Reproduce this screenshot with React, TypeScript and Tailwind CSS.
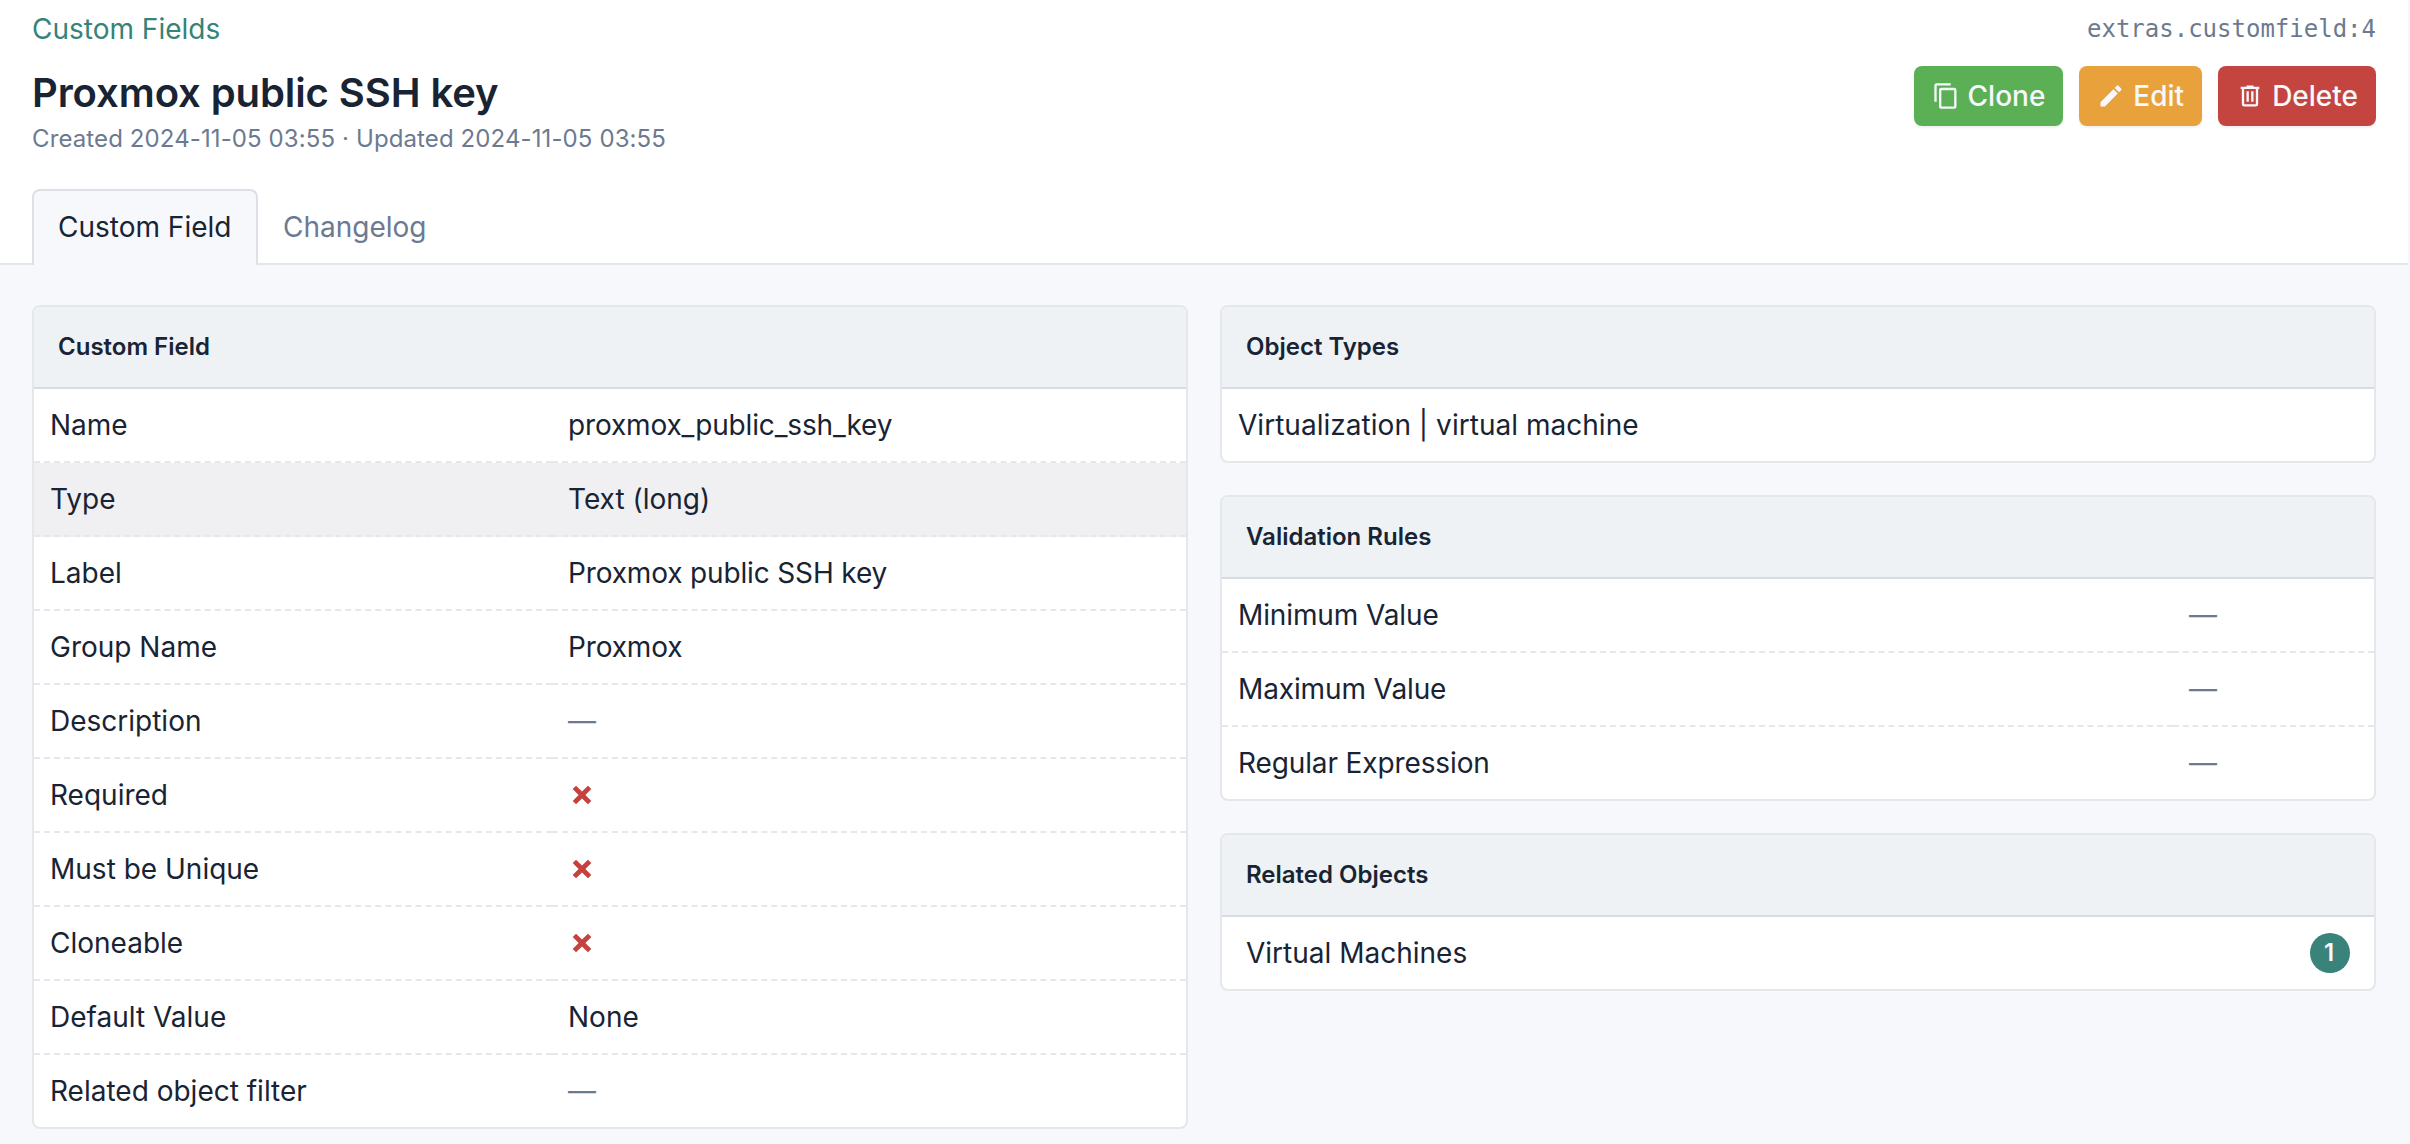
import type { ReactNode } from "react";

const ICONS = {
  copy: "M19,21H8V7H19M19,5H8A2,2 0 0,0 6,7V21A2,2 0 0,0 8,23H19A2,2 0 0,0 21,21V7A2,2 0 0,0 19,5M16,1H4A2,2 0 0,0 2,3V17H4V3H16V1Z",
  pencil:
    "M20.71,7.04C21.1,6.65 21.1,6 20.71,5.63L18.37,3.29C18,2.9 17.35,2.9 16.96,3.29L15.12,5.12L18.87,8.87M3,17.25V21H6.75L17.81,9.93L14.06,6.18L3,17.25Z",
  trash:
    "M9,3V4H4V6H5V19A2,2 0 0,0 7,21H17A2,2 0 0,0 19,19V6H20V4H15V3H9M7,6H17V19H7V6M9,8V17H11V8H9M13,8V17H15V8H13Z",
  close:
    "M20 6.91L17.09 4L12 9.09L6.91 4L4 6.91L9.09 12L4 17.09L6.91 20L12 14.91L17.09 20L20 17.09L14.91 12L20 6.91Z",
};

function Icon({ name, className = "" }: { name: keyof typeof ICONS; className?: string }) {
  return (
    <svg viewBox="0 0 24 24" className={`size-7 shrink-0 fill-current ${className}`}>
      <path d={ICONS[name]} />
    </svg>
  );
}

function Button({ icon, color, children }: { icon: keyof typeof ICONS; color: string; children: ReactNode }) {
  return (
    <button
      className={`flex h-[60px] items-center gap-2 rounded-lg px-[18px] text-[28px] leading-10 font-medium text-[#f6f8fb] shadow-[0_2px_2px_rgba(24,36,51,0.06)] ${color}`}
    >
      <Icon name={icon} />
      {children}
    </button>
  );
}

function Card({ title, children }: { title: string; children: ReactNode }) {
  return (
    <section className="overflow-hidden rounded-lg border-2 border-[#e6e7ec] bg-white">
      <h2 className="flex h-[82px] items-center border-b-2 border-[#d8dbe4] bg-[#eef2f5] px-6 text-2xl leading-10 font-semibold">
        {title}
      </h2>
      {children}
    </section>
  );
}

function Row({ label, labelWidth, active, children }: { label: string; labelWidth: string; active?: boolean; children: ReactNode }) {
  return (
    <div className={`group flex h-[74px] last:h-[72px] ${active ? "bg-[#f0f0f2]" : ""}`}>
      <div className={`shrink-0 border-b-2 border-dashed border-[#e6e7ec] px-4 py-4 leading-10 group-last:border-b-0 ${labelWidth}`}>
        {label}
      </div>
      <div className="flex-1 border-b-2 border-dashed border-[#e6e7ec] px-4 py-4 leading-10 group-last:border-b-0">
        {children}
      </div>
    </div>
  );
}

const Empty = () => <span className="text-[#6c7a91]">—</span>;
const No = () => (
  <span className="flex h-10 items-center text-[#c6423e]">
    <Icon name="close" />
  </span>
);
const Tight = ({ children }: { children: ReactNode }) => <span className="tracking-[-0.15px]">{children}</span>;

const FIELDS: { label: string; value: ReactNode; active?: boolean }[] = [
  { label: "Name", value: <Tight>proxmox_public_ssh_key</Tight> },
  { label: "Type", value: "Text (long)", active: true },
  { label: "Label", value: <Tight>Proxmox public SSH key</Tight> },
  { label: "Group Name", value: <Tight>Proxmox</Tight> },
  { label: "Description", value: <Empty /> },
  { label: "Required", value: <No /> },
  { label: "Must be Unique", value: <No /> },
  { label: "Cloneable", value: <No /> },
  { label: "Default Value", value: "None" },
  { label: "Related object filter", value: <Empty /> },
];

const RULES = ["Minimum Value", "Maximum Value", "Regular Expression"];

export default function App() {
  return (
    <div className="h-[1144px] w-[2410px] overflow-hidden bg-[#f6f8fc] pr-0.5 font-['Inter',sans-serif] text-[28px] leading-10 text-[#182433]">
      <header className="flex h-[265px] flex-col justify-between border-b-2 border-[#e4e6ea] bg-white px-8">
        <div className="flex items-start justify-between">
          <div>
            <a className="mt-[9px] block text-[#35837a]">Custom Fields</a>
            <h1 className="mt-4 text-[40px] leading-14 font-semibold tracking-[-0.09px]">Proxmox public SSH key</h1>
            <p className="mt-0.5 text-2xl leading-8 tracking-[0.108px] text-[#6c7a91]">
              Created 2024-11-05 03:55 · Updated 2024-11-05 03:55
            </p>
          </div>
          <div className="flex flex-col items-end">
            <code className="mt-[9px] font-['DejaVu_Sans_Mono',monospace] text-2xl leading-10 text-[#6c7a91]">
              extras.customfield:4
            </code>
            <div className="mt-[17px] flex gap-4">
              <Button icon="copy" color="bg-[#5bb055]">Clone</Button>
              <Button icon="pencil" color="bg-[#e9a23b]">Edit</Button>
              <Button icon="trash" color="bg-[#c4453f]">Delete</Button>
            </div>
          </div>
        </div>
        <nav className="-mb-0.5 flex h-[76px]">
          <a className="w-[226px] rounded-t-lg border-2 border-b-0 border-[#dce1e7] bg-[#f6f8fc] px-6 pt-4 whitespace-nowrap">
            Custom Field
          </a>
          <a className="px-[25px] pt-[18px] text-[#6c7a91]">Changelog</a>
        </nav>
      </header>

      <main className="grid grid-cols-2 items-start gap-8 px-8 pt-10">
        <Card title="Custom Field">
          {FIELDS.map((f) => (
            <Row key={f.label} label={f.label} labelWidth="w-[518px]" active={f.active}>
              {f.value}
            </Row>
          ))}
        </Card>
        <div className="flex flex-col gap-8">
          <Card title="Object Types">
            <div className="h-[72px] px-4 py-4 tracking-[0.03px]">Virtualization | virtual machine</div>
          </Card>
          <Card title="Validation Rules">
            {RULES.map((r) => (
              <Row key={r} label={r} labelWidth="w-[951px] tracking-[-0.12px]">
                <Empty />
              </Row>
            ))}
          </Card>
          <Card title="Related Objects">
            <div className="flex h-[72px] items-center justify-between px-6">
              Virtual Machines
              <span className="flex size-10 items-center justify-center rounded-full bg-[#39837a] pr-0.5 text-2xl font-semibold text-[#f6f8fb]">
                1
              </span>
            </div>
          </Card>
        </div>
      </main>
    </div>
  );
}
